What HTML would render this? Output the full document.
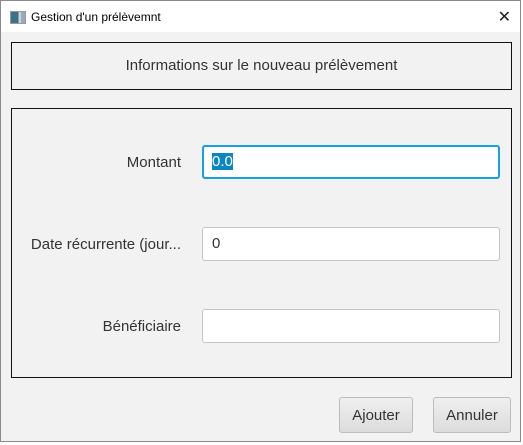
<!DOCTYPE html>
<html><head><style>
body{margin:0;width:523px;height:445px;overflow:hidden;background:#fff;font-family:"Liberation Sans",sans-serif}
.win{position:absolute;left:0;top:0;width:521px;height:442px;border:1px solid #8a8a8a;background:#f2f2f2;box-sizing:border-box}
.title{position:absolute;left:0;top:0;right:0;height:31px;background:#fff;font-size:12px;color:#000}
.title span{position:absolute;left:30px;top:9px}
.ico{position:absolute;left:9px;top:10px;width:14px;height:11px;background:linear-gradient(90deg,#3d6f8f 0 55%,#c9d6c9 55% 70%,#9ab 70%);border:1px solid #999}
.x{position:absolute;right:9px;top:6px;font-size:16px;font-weight:300;color:#222}
.box{position:absolute;border:1px solid #111;box-sizing:border-box}
.lbl{position:absolute;font-size:15px;color:#333;text-align:right;white-space:nowrap}
.fld{position:absolute;left:201px;width:298px;height:34px;background:#fff;border:1px solid #c4c4c4;border-radius:3px;box-sizing:border-box;font-size:15px;color:#333;padding:7px 0 0 9px}
.btn{position:absolute;top:396px;height:36px;border:1px solid #bdbdbd;border-radius:3px;background:linear-gradient(#efefef,#dcdcdc);box-sizing:border-box;font-size:15px;color:#333;text-align:center;line-height:36px}
</style></head><body>
<div class="win">
<div class="title"><div class="ico"></div><span>Gestion d'un prélèvemnt</span><div class="x">✕</div></div>
<div class="box" style="left:10px;top:41px;width:501px;height:48px;text-align:center;font-size:15px;color:#333;line-height:46px">Informations sur le nouveau prélèvement</div>
<div class="box" style="left:10px;top:107px;width:501px;height:270px"></div>
<div class="lbl" style="right:339px;top:153px">Montant</div>
<div class="lbl" style="right:339px;top:235px">Date récurrente (jour...</div>
<div class="lbl" style="right:339px;top:317px">Bénéficiaire</div>
<div class="fld" style="top:144px;border:2px solid #1aa0dc;padding:6px 0 0 8px"><span style="background:#0a86c5;color:#fff">0.0</span></div>
<div class="fld" style="top:226px">0</div>
<div class="fld" style="top:308px"></div>
<div class="btn" style="left:338px;width:74px">Ajouter</div>
<div class="btn" style="left:432px;width:78px">Annuler</div>
</div>
</body></html>
